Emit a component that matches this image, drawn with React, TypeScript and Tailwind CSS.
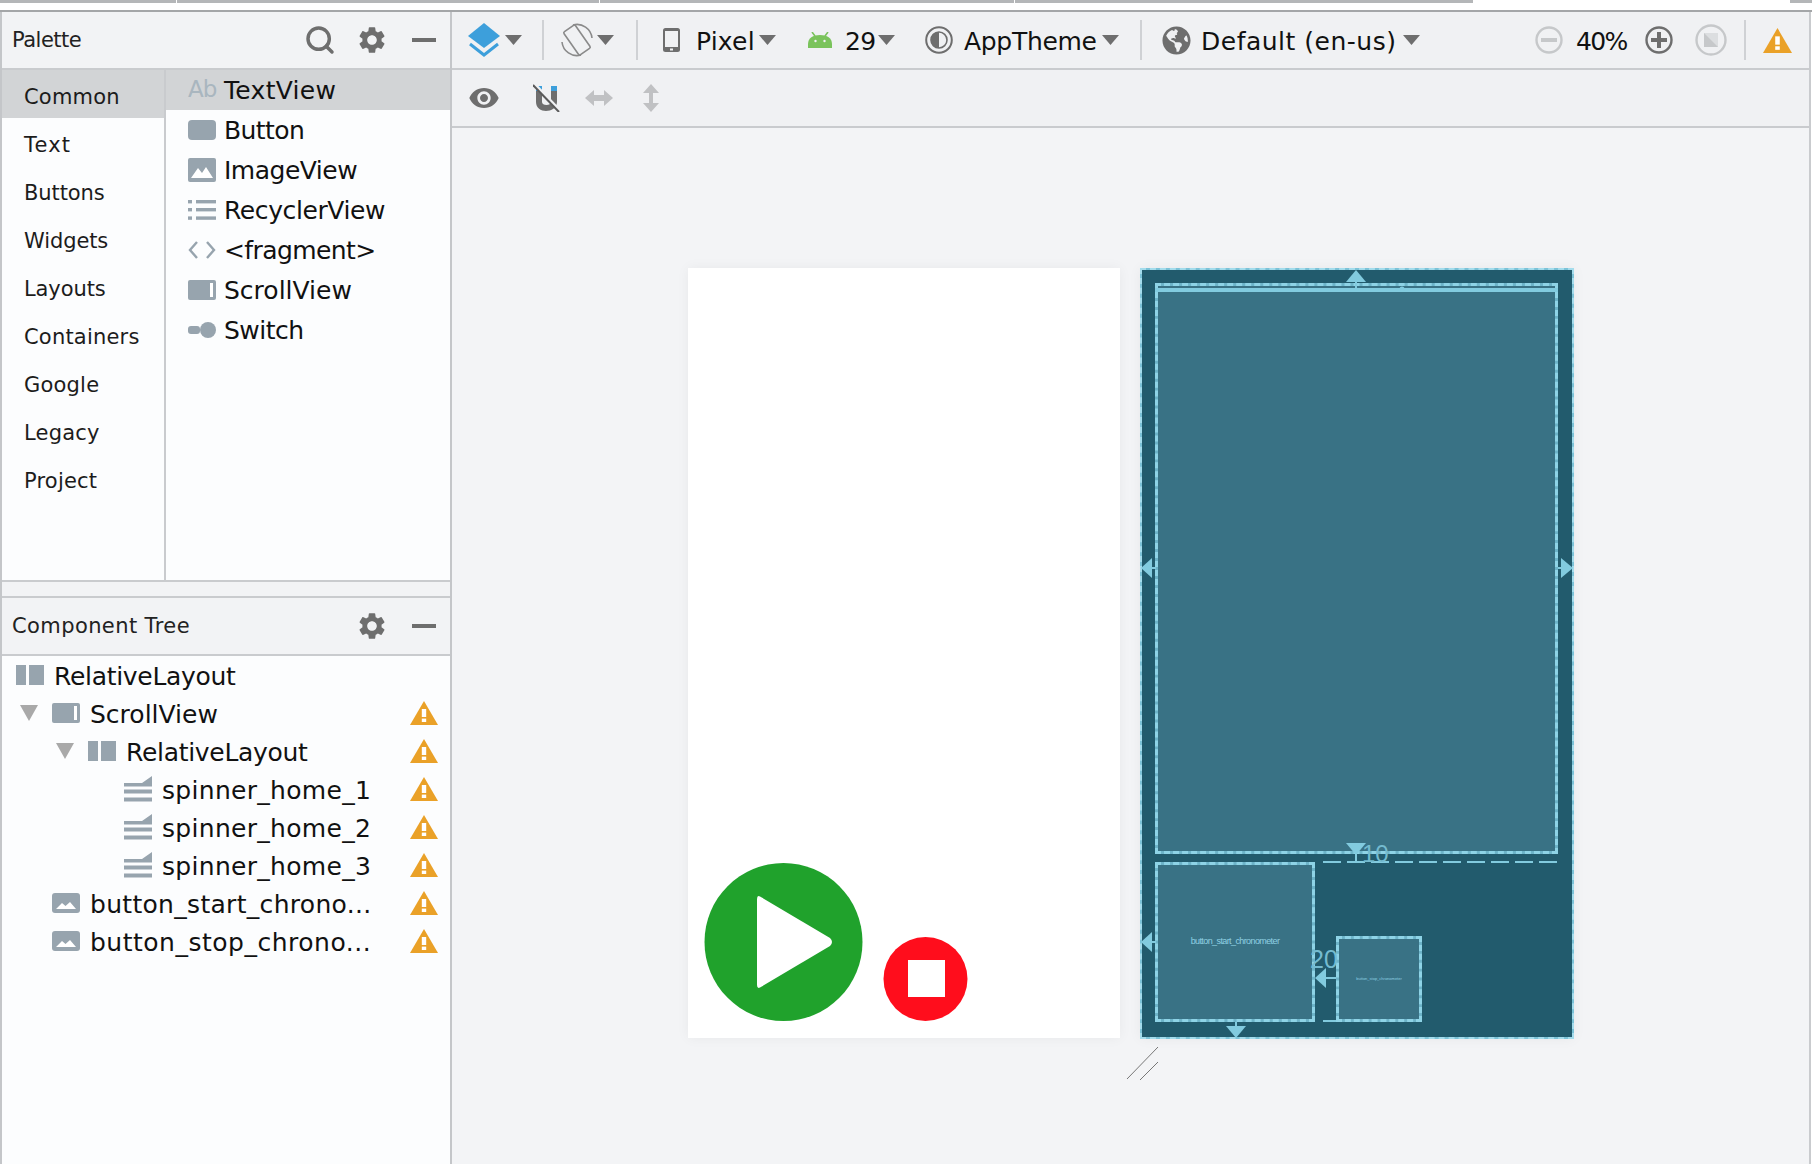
import React from "react";
import { MdSettings, MdVisibility } from "react-icons/md";
import { FaGlobeAmericas } from "react-icons/fa";
import { Search } from "lucide-react";

const FONT = "font-['DejaVu_Sans',sans-serif]";

const Caret = ({ className = "" }: { className?: string }) => (
  <svg width="17" height="10" viewBox="0 0 17 10" className={"shrink-0 " + className}>
    <path d="M0 0H17L8.5 10Z" fill="#6e6e6e" />
  </svg>
);

const Sep = ({ className = "" }: { className?: string }) => (
  <div className={"w-[2px] h-[40px] bg-[#cfd1d4] shrink-0 " + className} />
);

const Warn = ({ w = 28, h = 24 }: { w?: number; h?: number }) => (
  <svg width={w} height={h} viewBox="0 0 28 24" className="shrink-0">
    <path d="M14 0L28 24H0Z" fill="#eaa128" />
    <rect x="11.8" y="8" width="4.4" height="8" fill="#fff" />
    <rect x="11.8" y="17.6" width="4.4" height="3.4" fill="#fff" />
  </svg>
);

const C = "#97a4ae";
const IconAb = () => (
  <span className="w-[28px] text-[23px] leading-none text-[#a9b6bf] tracking-[-1px] whitespace-nowrap -translate-y-[1px]">Ab</span>
);
const IconButton = () => (
  <svg width="28" height="20" viewBox="0 0 28 20"><rect width="28" height="20" rx="4" fill={C} /></svg>
);
const IconImage = () => (
  <svg width="28" height="24" viewBox="0 0 28 24">
    <rect width="28" height="24" rx="2" fill={C} />
    <path d="M3 20L10 10L14 15L18 9L25 20Z" fill="#fff" />
  </svg>
);
const IconImageSmall = () => (
  <svg width="28" height="20" viewBox="0 0 28 20">
    <rect width="28" height="20" rx="3" fill={C} />
    <path d="M4 16L10 10L13.5 13L18 9L24 16Z" fill="#fff" />
  </svg>
);
const IconList = () => (
  <svg width="28" height="20" viewBox="0 0 28 20" fill={C}>
    <rect x="0" y="0" width="4" height="3.4" /><rect x="8" y="0" width="20" height="3.4" />
    <rect x="0" y="8" width="4" height="3.4" /><rect x="8" y="8" width="20" height="3.4" />
    <rect x="0" y="16.4" width="4" height="3.4" /><rect x="8" y="16.4" width="20" height="3.4" />
  </svg>
);
const IconCode = () => (
  <svg width="28" height="20" viewBox="0 0 28 20" fill="none" stroke={C} strokeWidth="2.4">
    <path d="M9 2L2 10L9 18" /><path d="M19 2L26 10L19 18" />
  </svg>
);
const IconScroll = () => (
  <svg width="28" height="20" viewBox="0 0 28 20">
    <rect width="28" height="20" rx="2" fill={C} />
    <rect x="22" y="3" width="3" height="14" fill="#fff" />
  </svg>
);
const IconSwitch = () => (
  <svg width="28" height="18" viewBox="0 0 28 18">
    <rect x="0" y="5" width="12" height="8" rx="3" fill={C} />
    <circle cx="20" cy="9" r="8" fill={C} />
  </svg>
);
const IconRelative = () => (
  <svg width="28" height="20" viewBox="0 0 28 20" fill={C}>
    <rect width="10" height="20" /><rect x="13" width="15" height="20" />
  </svg>
);
const IconSpinner = () => (
  <svg width="28" height="26" viewBox="0 0 28 26" fill={C}>
    <path d="M0 7H18L28 0V10.5H0Z" />
    <rect y="13.5" width="28" height="4" />
    <rect y="21.5" width="28" height="4" />
  </svg>
);
const TreeCaret = () => (
  <svg width="18" height="16" viewBox="0 0 18 16"><path d="M0 0H18L9 16Z" fill="#a9a9a9" /></svg>
);

const PanelHeader = ({ title, search, track }: { title: string; search?: boolean; track: string }) => (
  <div className="h-[56px] bg-[#f2f3f5] flex items-center pl-[10px] shrink-0">
    <span className={"text-[21px] pt-[2px] text-[#222] flex-1 " + track}>{title}</span>
    {search && <Search size={32} strokeWidth={2.6} color="#6e6e6e" className="mr-[20px]" />}
    <MdSettings size={32} color="#6e6e6e" className="mr-[24px]" />
    <div className="w-[24px] h-[4px] bg-[#6e6e6e] mr-[14px]" />
  </div>
);

const categories: [string, string][] = [
  ["Common", "tracking-[0.2px]"],
  ["Text", "tracking-[1.2px]"],
  ["Buttons", "tracking-[-0.1px]"],
  ["Widgets", "tracking-[-0.1px]"],
  ["Layouts", "tracking-[-0.1px]"],
  ["Containers", "tracking-[0.2px]"],
  ["Google", "tracking-[0.2px]"],
  ["Legacy", "tracking-[0.2px]"],
  ["Project", "tracking-[0.2px]"],
];
const widgets: [string, React.ReactNode, string][] = [
  ["TextView", <IconAb />, "tracking-[0.3px]"],
  ["Button", <IconButton />, "tracking-[-0.6px]"],
  ["ImageView", <IconImage />, "tracking-[-0.5px]"],
  ["RecyclerView", <IconList />, "tracking-[-0.4px]"],
  ["<fragment>", <IconCode />, "tracking-[-0.6px]"],
  ["ScrollView", <IconScroll />, "tracking-[0px]"],
  ["Switch", <IconSwitch />, "tracking-[-0.5px]"],
];

type Row = { label: string; indent: number; caret?: boolean; icon: React.ReactNode; warn: boolean; track: string };
const rows: Row[] = [
  { label: "RelativeLayout", indent: 14, icon: <IconRelative />, warn: false, track: "tracking-[-0.3px]" },
  { label: "ScrollView", indent: 50, caret: true, icon: <IconScroll />, warn: true, track: "tracking-[0px]" },
  { label: "RelativeLayout", indent: 86, caret: true, icon: <IconRelative />, warn: true, track: "tracking-[-0.3px]" },
  { label: "spinner_home_1", indent: 122, icon: <IconSpinner />, warn: true, track: "tracking-[0.3px]" },
  { label: "spinner_home_2", indent: 122, icon: <IconSpinner />, warn: true, track: "tracking-[0.3px]" },
  { label: "spinner_home_3", indent: 122, icon: <IconSpinner />, warn: true, track: "tracking-[0.3px]" },
  { label: "button_start_chrono...", indent: 50, icon: <IconImageSmall />, warn: true, track: "tracking-[0.3px]" },
  { label: "button_stop_chrono...", indent: 50, icon: <IconImageSmall />, warn: true, track: "tracking-[0.5px]" },
];

const LeftPanel = () => (
  <aside className="w-[452px] shrink-0 flex flex-col border-l-2 border-[#c4c6c9] border-r-2 bg-[#fcfdfe]">
    <PanelHeader title="Palette" search track="tracking-[-0.5px]" />
    <div className="h-[512px] shrink-0 flex border-t-2 border-[#c9cbce]">
      <div className="w-[162px] shrink-0 border-r-2 border-[#c9cbce] box-content">
        {categories.map(([c, track], i) => (
          <div
            key={c}
            className={
              "h-[48px] flex items-center pl-[22px] pt-[8px] text-[21px] text-[#1c1c1c] " +
              track + " " +
              (i === 0 ? "bg-[#d2d4d6]" : "")
            }
          >
            {c}
          </div>
        ))}
      </div>
      <div className="flex-1">
        {widgets.map(([name, icon, track], i) => (
          <div
            key={name}
            className={"h-[40px] flex items-center pl-[22px] " + (i === 0 ? "bg-[#d2d4d6]" : "")}
          >
            <div className="w-[28px] flex justify-center items-center shrink-0">{icon}</div>
            <span className={"ml-[8px] pt-[2px] text-[25px] text-[#111] whitespace-nowrap " + track}>{name}</span>
          </div>
        ))}
      </div>
    </div>
    <div className="h-[16px] shrink-0 bg-[#f2f3f5] border-t-2 border-[#c9cbce]" />
    <div className="border-t-2 border-[#c9cbce]">
      <PanelHeader title="Component Tree" track="tracking-[0.4px]" />
    </div>
    <div className="flex-1 border-t-2 border-[#c9cbce]">
      {rows.map((r, i) => (
        <div key={i} className="h-[38px] flex items-center pr-[12px] relative" style={{ paddingLeft: r.indent }}>
          {r.caret && (
            <div className="absolute top-[11px]" style={{ left: r.indent - 32 }}>
              <TreeCaret />
            </div>
          )}
          <div className="w-[28px] flex justify-center items-center shrink-0">{r.icon}</div>
          <span className={"ml-[10px] pt-[4px] flex-1 text-[25px] text-[#111] whitespace-nowrap " + r.track}>{r.label}</span>
          {r.warn && <Warn />}
        </div>
      ))}
    </div>
  </aside>
);

const LayersIcon = () => (
  <svg width="32" height="34" viewBox="0 0 32 34">
    <path d="M16 0L32 13L16 25L0 13Z" fill="#3d9fdb" />
    <path d="M2 21L16 32L30 21" fill="none" stroke="#3d9fdb" strokeWidth="3" />
  </svg>
);
const RotateIcon = () => (
  <svg width="32" height="34" viewBox="0 0 32 34" fill="none" stroke="#8a8a8a" strokeWidth="1.6">
    <rect x="9" y="3" width="14" height="28" rx="1.5" transform="rotate(-35 16 17)" />
    <path d="M12 2A15 15 0 0 1 31 15" />
    <path d="M20 32A15 15 0 0 1 1 19" />
  </svg>
);
const PhoneIcon = () => (
  <svg width="17" height="24" viewBox="0 0 17 24">
    <rect width="17" height="24" rx="2.5" fill="#6e6e6e" />
    <rect x="2" y="3" width="13" height="16" fill="#f0f1f3" />
    <rect x="7" y="20.5" width="3" height="2" fill="#f0f1f3" />
  </svg>
);
const AndroidIcon = () => (
  <svg width="24" height="16" viewBox="0 0 24 16">
    <path d="M0 16V12C0 6 5 3 12 3S24 6 24 12V16Z" fill="#7ac35b" />
    <path d="M4 0L7 4M20 0L17 4" stroke="#7ac35b" strokeWidth="1.6" />
    <circle cx="7.5" cy="9" r="1.2" fill="#f0f1f3" />
    <circle cx="16.5" cy="9" r="1.2" fill="#f0f1f3" />
  </svg>
);
const ThemeIcon = () => (
  <svg width="28" height="28" viewBox="0 0 28 28">
    <circle cx="14" cy="14" r="12.8" fill="none" stroke="#6e6e6e" strokeWidth="2" />
    <circle cx="14" cy="14" r="8" fill="none" stroke="#6e6e6e" strokeWidth="1.6" />
    <path d="M14 6A8 8 0 0 0 14 22Z" fill="#6e6e6e" />
  </svg>
);
const ZoomCircle = ({ color, plus }: { color: string; plus?: boolean }) => (
  <svg width="28" height="28" viewBox="0 0 28 28">
    <circle cx="14" cy="14" r="12.5" fill="none" stroke={color} strokeWidth="2.4" />
    <rect x="6" y="12" width="16" height="4" fill={color} />
    {plus && <rect x="12" y="6" width="4" height="16" fill={color} />}
  </svg>
);
const ResetIcon = () => (
  <svg width="32" height="32" viewBox="0 0 32 32">
    <circle cx="16" cy="16" r="14.5" fill="none" stroke="#c6c8ca" strokeWidth="2.4" />
    <rect x="9" y="9" width="14" height="14" fill="#c6c8ca" />
    <path d="M9 9H23V23Z" fill="#dcdee0" />
  </svg>
);
const MagnetIcon = () => (
  <svg width="28" height="28" viewBox="0 0 28 28">
    <path d="M3 5V18C3 24 8 27 13 27S24 24 24 18V5H18V18C18 20 16 21 13.5 21S9 20 9 18V5Z" fill="#6e6e6e" />
    <rect x="3" y="2" width="6" height="5" fill="#3d9fdb" />
    <rect x="18" y="2" width="6" height="5" fill="#3d9fdb" />
    <path d="M1 0L27 27" stroke="#f0f1f3" strokeWidth="3.6" />
    <path d="M0 1L26 28" stroke="#5a5a5a" strokeWidth="2" />
  </svg>
);
const HArrows = () => (
  <svg width="28" height="16" viewBox="0 0 28 16" fill="#c0c1c3">
    <path d="M0 8L9 0V5H19V0L28 8L19 16V11H9V16Z" />
  </svg>
);
const VArrows = () => (
  <svg width="16" height="28" viewBox="0 0 16 28" fill="#c0c1c3">
    <path d="M8 0L16 9H10V19H16L8 28L0 19H6V9H0Z" />
  </svg>
);

const Toolbar = () => (
  <div className="h-[56px] shrink-0 bg-[#f0f1f3] flex items-center text-[25px] text-[#111] whitespace-nowrap">
    <div className="ml-[16px]"><LayersIcon /></div>
    <Caret className="ml-[5px]" />
    <Sep className="ml-[20px]" />
    <div className="ml-[17px]"><RotateIcon /></div>
    <Caret className="ml-[4px]" />
    <Sep className="ml-[22px]" />
    <div className="ml-[25px]"><PhoneIcon /></div>
    <span className="ml-[16px] pt-[3px] w-[63px] tracking-[0.2px]">Pixel</span>
    <Caret />
    <div className="ml-[32px]"><AndroidIcon /></div>
    <span className="ml-[13px] pt-[3px] w-[33px] tracking-[-0.7px]">29</span>
    <Caret />
    <div className="ml-[30px]"><ThemeIcon /></div>
    <span className="ml-[11px] pt-[3px] w-[138px] tracking-[-0.3px]">AppTheme</span>
    <Caret />
    <Sep className="ml-[21px]" />
    <FaGlobeAmericas size={29} color="#6e6e6e" className="ml-[20px] shrink-0" />
    <span className="ml-[10px] pt-[3px] w-[202px] tracking-[0.5px]">Default (en-us)</span>
    <Caret />
    <div className="ml-[115px]"><ZoomCircle color="#c6c8ca" /></div>
    <span className="ml-[13px] pt-[3px] w-[56px] tracking-[-1.7px]">40%</span>
    <div className="ml-[13px]"><ZoomCircle color="#6e6e6e" plus /></div>
    <div className="ml-[22px]"><ResetIcon /></div>
    <Sep className="ml-[17px]" />
    <div className="ml-[17px]"><Warn w={29} h={25} /></div>
  </div>
);

const SubToolbar = () => (
  <div className="h-[56px] shrink-0 bg-[#f0f1f3] flex items-center">
    <MdVisibility size={32} color="#6e6e6e" className="ml-[16px]" />
    <div className="ml-[33px]"><MagnetIcon /></div>
    <div className="ml-[24px]"><HArrows /></div>
    <div className="ml-[30px]"><VArrows /></div>
  </div>
);

const Design = () => (
  <div className="w-[432px] h-[770px] bg-white relative shadow-[0_0_12px_rgba(0,0,0,0.05)]">
    <svg className="absolute left-0 top-0" width="432" height="770" viewBox="0 0 432 770">
      <circle cx="95.5" cy="674" r="79" fill="#20a22c" />
      <path d="M72 628.5L142 670Q146 674 142 678L72 719.5Q69 721 69 717V631Q69 627 72 628.5Z" fill="#fff" />
      <circle cx="237.5" cy="711" r="42" fill="#ff0d1c" />
      <rect x="220" y="692" width="37" height="37" fill="#fff" />
    </svg>
  </div>
);

const BP = "#82cbdf";

const Box = ({ className, children }: { className: string; children?: React.ReactNode }) => (
  <div className={"absolute bg-[#397285] border-[3px] border-[#6db4c9] flex items-center justify-center " + className}>
    <div className="absolute -inset-[3px] border-[3px] border-dashed border-[#8ed3e6]" />
    {children}
  </div>
);

const Blueprint = () => (
  <div className="w-[434px] h-[771px] bg-[#225b6d] relative shadow-[0_0_12px_rgba(0,0,0,0.05)]">
    <div className="absolute inset-0 border-2 border-[#7cc3d8]" />
    <div className="absolute inset-0 border-2 border-dashed border-[#a4dcec]" />
    <Box className="left-[15px] top-[15px] w-[403px] h-[571px]" />
    <div className="absolute left-[15px] top-[20px] w-[403px] h-[4px] bg-[#82cbdf]" />
    <Box className="left-[15px] top-[594px] w-[160px] h-[160px]">
      <span className="relative text-[9px] text-[#8fd0e2] font-['Liberation_Sans',sans-serif] tracking-[-0.6px] whitespace-nowrap">
        button_start_chronometer
      </span>
    </Box>
    <Box className="left-[196px] top-[668px] w-[86px] h-[86px]">
      <span className="relative text-[4px] text-[#8fd0e2] font-['Liberation_Sans',sans-serif] whitespace-nowrap">
        button_stop_chronometer
      </span>
    </Box>
    <svg className="absolute left-0 top-0" width="434" height="771" viewBox="0 0 434 771" fill={BP}>
      <path d="M216 2L226 14H206Z" />
      <rect x="215" y="12" width="2" height="10" />
      <circle cx="262" cy="21" r="2.5" />
      <circle cx="224" cy="22" r="1.4" />
      <path d="M206 575H226L216 587Z" />
      <rect x="215" y="586" width="2" height="8" />
      <path d="M183 594H418" stroke={BP} strokeWidth="2" strokeDasharray="18 6" fill="none" />
      <path d="M183 753H196" stroke={BP} strokeWidth="2" fill="none" />
      <path d="M1 300L12 290V310Z" /><rect x="10" y="299" width="6" height="2" />
      <path d="M433 300L421 290V310Z" /><rect x="418" y="299" width="6" height="2" />
      <path d="M1 674L12 664V684Z" /><rect x="10" y="673" width="6" height="2" />
      <path d="M175 710L186 700V720Z" /><rect x="184" y="709" width="12" height="2" />
      <path d="M86 758H106L96 770Z" /><rect x="95" y="754" width="2" height="5" />
    </svg>
    <span className="absolute left-[222px] top-[572px] text-[24px] leading-[28px] text-[#74bbd0] font-['Liberation_Sans',sans-serif]">
      10
    </span>
    <span className="absolute left-[170px] top-[677px] text-[25px] leading-[28px] text-[#74bbd0] font-['Liberation_Sans',sans-serif]">
      20
    </span>
  </div>
);

const Canvas = () => (
  <div className="flex-1 bg-[#f3f4f6] pt-[140px] pl-[236px] relative">
    <div className="flex gap-[20px]">
      <Design />
      <Blueprint />
    </div>
    <svg className="absolute left-[673px] top-[917px]" width="36" height="36" viewBox="0 0 36 36" stroke="#777" strokeWidth="1" fill="none">
      <path d="M2 34L33 2" />
      <path d="M15 35L33 17" />
    </svg>
  </div>
);

const TopStrip = () => (
  <div className="h-[12px] shrink-0 bg-white border-b-2 border-[#a4a6a8] relative">
    <div className="flex h-[3px]">
      <div className="w-[176px] bg-[#b4b6b8]" />
      <div className="w-[1px] bg-white" />
      <div className="w-[422px] bg-[#b4b6b8]" />
      <div className="w-[1px] bg-white" />
      <div className="w-[414px] bg-[#b4b6b8]" />
      <div className="w-[1px] bg-white" />
      <div className="w-[458px] bg-[#b4b6b8]" />
      <div className="w-[317px]" />
      <div className="w-[22px] bg-[#b4b6b8]" />
    </div>
  </div>
);

export default function App() {
  return (
    <div className={"w-[1812px] h-[1164px] overflow-hidden bg-white flex flex-col " + FONT}>
      <TopStrip />
      <div className="flex-1 flex min-h-0">
        <LeftPanel />
        <main className="flex-1 flex flex-col border-r-2 border-[#c9cbce] mr-[1px] min-w-0">
          <Toolbar />
          <div className="border-t-2 border-[#c9cbce]"><SubToolbar /></div>
          <div className="flex-1 flex border-t-2 border-[#c9cbce]"><Canvas /></div>
        </main>
      </div>
    </div>
  );
}
